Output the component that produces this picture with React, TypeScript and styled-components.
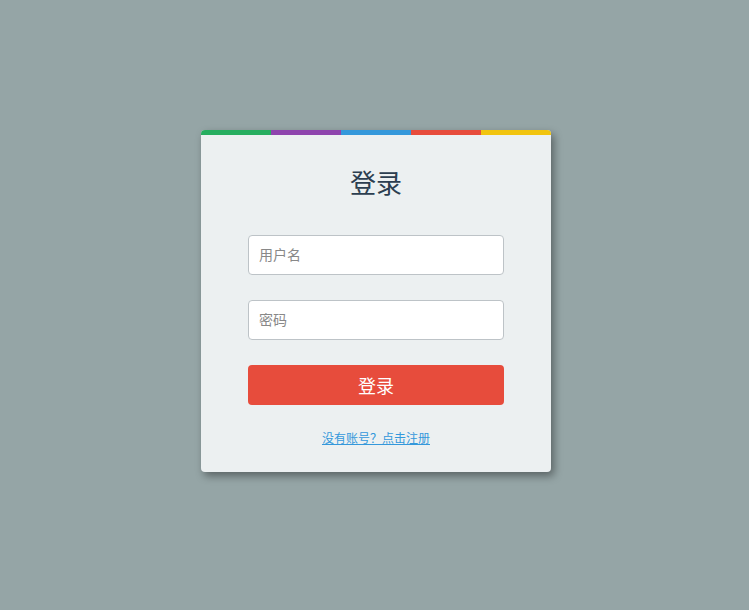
import React from 'react';
import styled, { createGlobalStyle } from 'styled-components';

const GlobalStyle = createGlobalStyle`
	html, body {
		margin: 0;
		padding: 0;
		background-color: #95a5a6;
		font-family: "Liberation Sans", "Noto Sans CJK SC", sans-serif;
	}
`;

const Page = styled.div`
	width: 100%;
	height: 610px;
	box-sizing: border-box;
	display: flex;
	justify-content: center;
	align-items: flex-start;
	padding: 130px 0 0 3px;
`;

const Card = styled.div`
	width: 350px;
	background-color: #ecf0f1;
	border-radius: 4px;
	overflow: hidden;
	box-shadow: 3px 4px 8px rgba(0, 0, 0, 0.4);
`;

const Stripe = styled.div`
	display: flex;
	height: 5px;
`;

const StripePart = styled.div<{ color: string }>`
	flex: 1;
	background-color: ${({ color }) => color};
`;

const Body = styled.div`
	display: flex;
	flex-direction: column;
	padding: 31px 47px 24px;
`;

const Title = styled.h2`
	margin: 0 0 33px;
	font-size: 26px;
	line-height: 36px;
	font-weight: normal;
	text-align: center;
	color: #2c3e50;
`;

const Input = styled.input`
	box-sizing: border-box;
	width: 100%;
	height: 40px;
	margin-bottom: 25px;
	padding: 0 10px;
	border: 1px solid #bdc3c7;
	border-radius: 4px;
	background-color: #fff;
	font-family: inherit;
	font-size: 14px;
	color: #333;
	outline: none;

	&::placeholder {
		color: #888;
	}
`;

const Button = styled.button`
	height: 40px;
	border: none;
	border-radius: 4px;
	background-color: #e74c3c;
	color: #fff;
	font-family: inherit;
	font-size: 18px;
	cursor: pointer;
`;

const Link = styled.a`
	display: block;
	margin-top: 25px;
	font-size: 12px;
	line-height: 18px;
	text-align: center;
	color: #3498db;
	text-decoration: underline;
`;

const stripeColors = ['#27ae60', '#8e44ad', '#3498db', '#e74c3c', '#f1c40f'];

function App() {
	return (
		<>
			<GlobalStyle />
			<Page>
				<Card>
					<Stripe>
						{stripeColors.map((c) => (
							<StripePart key={c} color={c} />
						))}
					</Stripe>
					<Body>
						<Title>登录</Title>
						<Input type="text" placeholder="用户名" />
						<Input type="password" placeholder="密码" />
						<Button>登录</Button>
						<Link href="#">没有账号？点击注册</Link>
					</Body>
				</Card>
			</Page>
		</>
	);
}

export default App;
